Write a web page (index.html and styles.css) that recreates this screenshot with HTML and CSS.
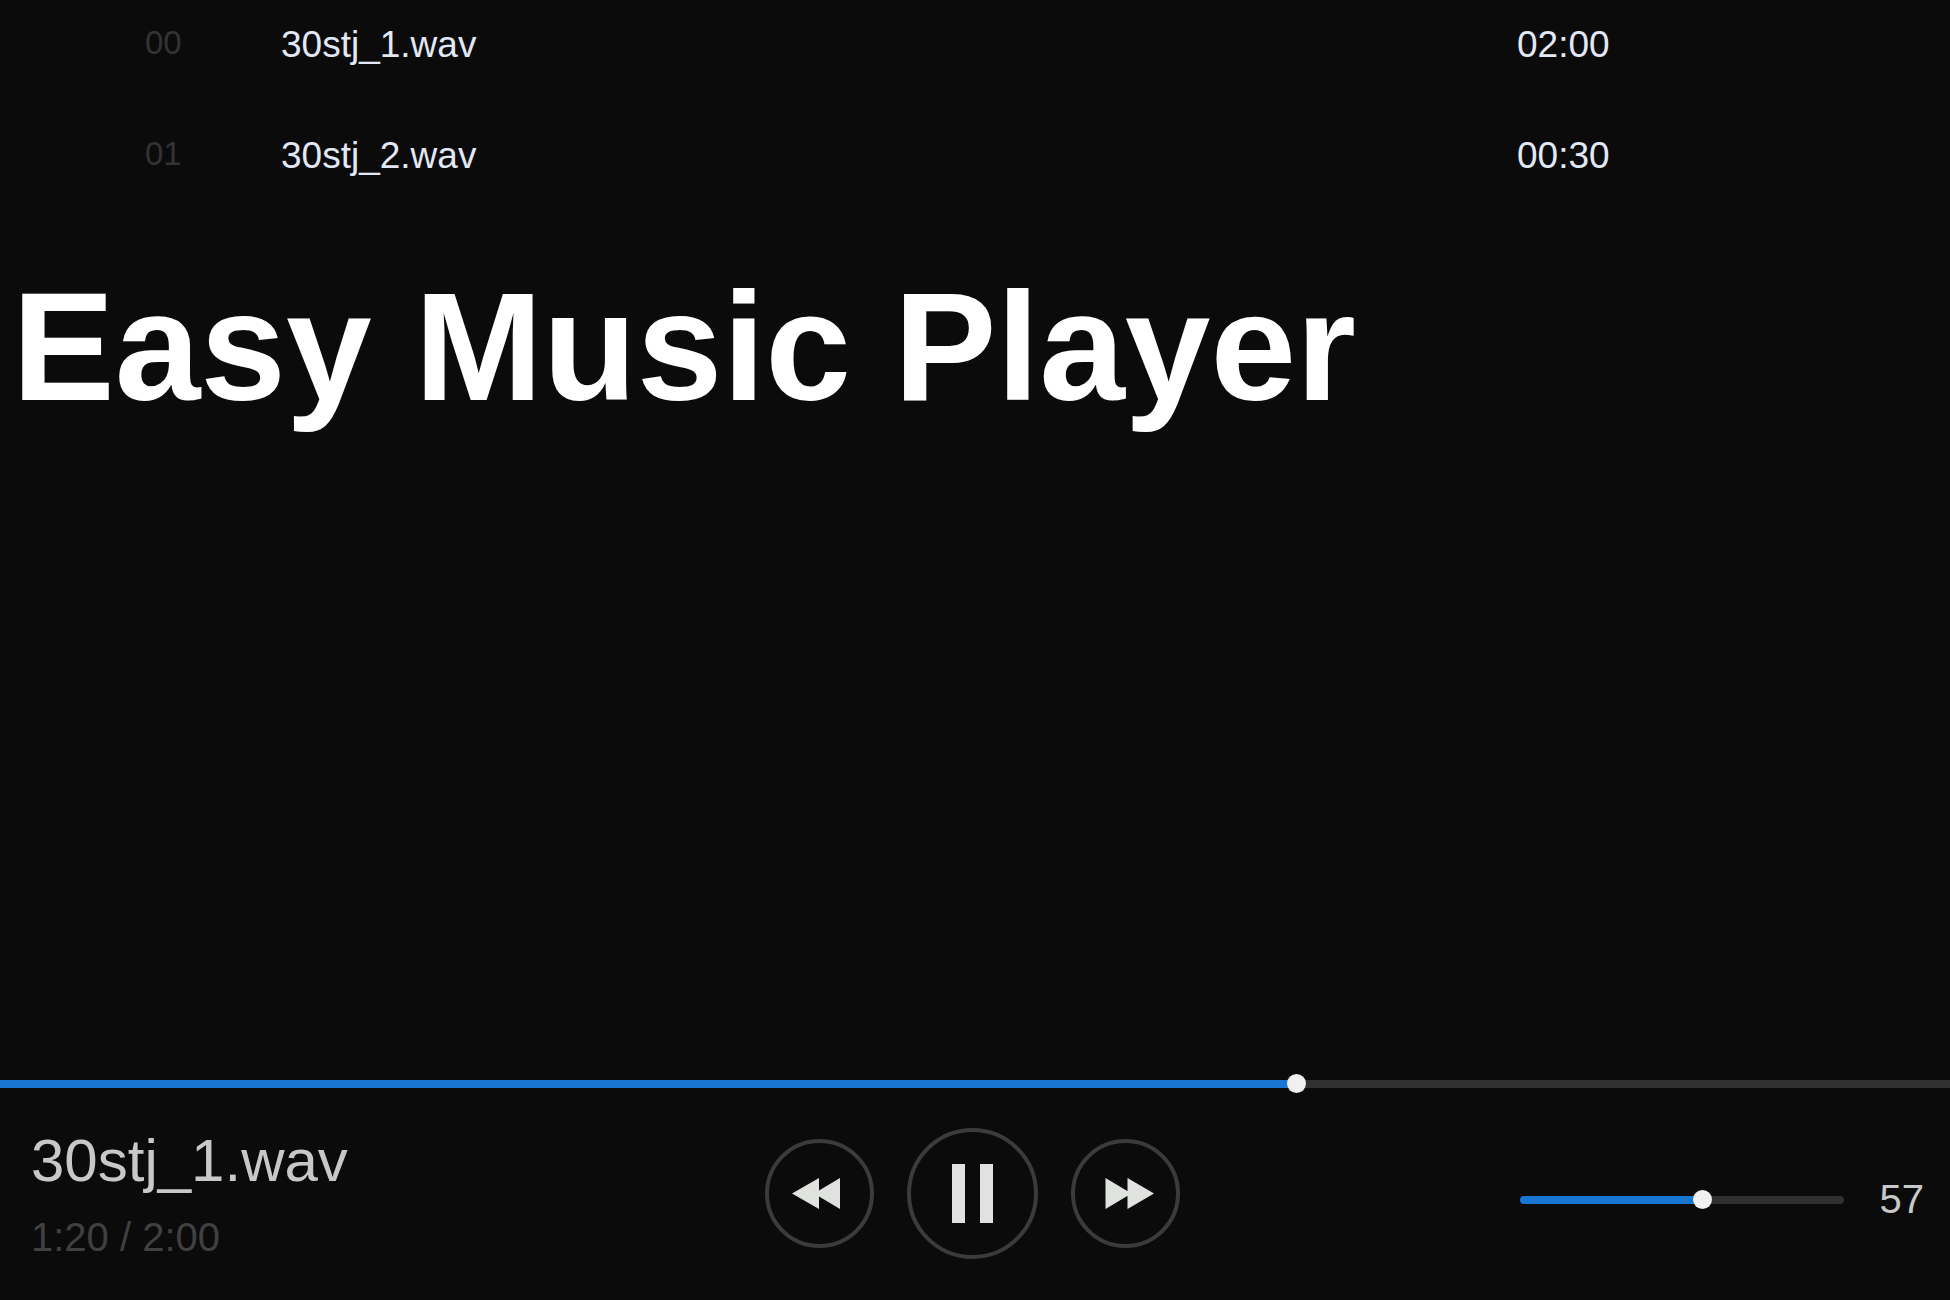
FILE: index.html
```html
<!DOCTYPE html>
<html lang="en">
<head>
    <meta charset="UTF-8">
    <meta name="viewport" content="width=device-width, initial-scale=1.0">
    <title>Easy Music Player</title>
    <link rel="stylesheet" href="styles.css">
</head>
<body>
    <main class="content">
        <table class="playlist">
            <tbody>
                <tr>
                    <td class="track-index">00</td>
                    <td class="track-name">30stj_1.wav</td>
                    <td class="track-length">02:00</td>
                </tr>
                <tr>
                    <td class="track-index">01</td>
                    <td class="track-name">30stj_2.wav</td>
                    <td class="track-length">00:30</td>
                </tr>
            </tbody>
        </table>
        <h1 class="title">Easy Music Player</h1>
    </main>
    <footer class="player">
        <input type="range" class="slider" id="seek" aria-label="Seek" min="0" max="120" value="80" style="--fill: 66.67%">
        <div class="player-body">
            <div class="now-playing">
                <div class="now-playing-name">30stj_1.wav</div>
                <div class="now-playing-time">1:20 / 2:00</div>
            </div>
            <div class="controls">
                <button type="button" class="control-btn" id="prevBtn" aria-label="Previous">
                    <svg viewBox="4 4 101 101">
                        <path d="M27 54.5L54 39V70ZM49 54.5L75 39V70Z"/>
                    </svg>
                </button>
                <button type="button" class="control-btn play-btn" id="playBtn" aria-label="Pause">
                    <svg viewBox="4 4 123 123">
                        <path d="M45 36H58V95H45ZM73 36H86V95H73Z"/>
                    </svg>
                </button>
                <button type="button" class="control-btn" id="nextBtn" aria-label="Next">
                    <svg viewBox="4 4 101 101">
                        <path d="M34.5 39L60.5 54.5L34.5 70ZM56.5 39L83 54.5L56.5 70Z"/>
                    </svg>
                </button>
            </div>
            <div class="volume">
                <input type="range" class="slider volume-slider" id="volume" aria-label="Volume" min="0" max="100" value="57" style="--fill: 57%">
                <output class="volume-value" for="volume">57</output>
            </div>
        </div>
    </footer>
    <script>
        const volume = document.getElementById('volume');
        const seek = document.getElementById('seek');
        const volumeValue = document.querySelector('.volume-value');

        function updateFill(slider) {
            slider.style.setProperty('--fill', slider.value / slider.max * 100 + '%');
        }

        seek.addEventListener('input', () => updateFill(seek));
        volume.addEventListener('input', () => {
            updateFill(volume);
            volumeValue.textContent = volume.value;
        });
    </script>
</body>
</html>
```
FILE: styles.css
```css
:root {
    --background-color: #0b0b0b;
    --accent-color: #1976d2;
    --track-color: #303030;
    --border-color: #3b3b3a;
    --icon-color: #e0e2df;
    --text-color: #c8c8c8;
    --muted-color: #404040;
}

* {
    box-sizing: border-box;
}

body {
    margin: 0;
    min-height: 100vh;
    display: flex;
    flex-direction: column;
    background-color: var(--background-color);
    color: var(--text-color);
    font-family: "Liberation Sans", Helvetica, Arial, sans-serif;
}

.content {
    flex: 1;
}

/* Playlist */
.playlist {
    width: 100%;
    table-layout: fixed;
    border-collapse: collapse;
    font-size: 37px;
    color: #e2e8f5;
}

.playlist td {
    padding: 24px 0 45px;
    vertical-align: top;
}

.playlist .track-index {
    width: 281px;
    padding-left: 145px;
    font-size: 33px;
    color: #333;
}

.track-length {
    width: 433px;
}

.title {
    margin: 37px 12px 0;
    font-size: 154px;
    font-weight: bold;
    color: #fff;
}

/* Sliders */
.slider {
    display: block;
    width: 100%;
    height: 20px;
    margin: 0;
    appearance: none;
    background: transparent;
    cursor: pointer;
}

.slider::-webkit-slider-runnable-track {
    height: 8px;
    background: linear-gradient(to right, var(--accent-color) var(--fill), var(--track-color) var(--fill));
}

.slider::-webkit-slider-thumb {
    appearance: none;
    width: 19px;
    height: 19px;
    margin-top: -6px;
    border-radius: 50%;
    background-color: #f0f0f0;
}

.volume-slider {
    width: 324px;
}

.volume-slider::-webkit-slider-runnable-track {
    border-radius: 4px;
}

/* Player bar */
.player-body {
    display: grid;
    grid-template-columns: 1fr auto 1fr;
    align-items: center;
    height: 206px;
    padding: 0 26px;
}

.now-playing {
    display: flex;
    flex-direction: column;
    gap: 20px;
    padding: 0 0 4px 5px;
}

.now-playing-name {
    font-size: 60px;
    line-height: 64px;
}

.now-playing-time {
    font-size: 40px;
    line-height: 48px;
    color: var(--muted-color);
}

.controls {
    display: flex;
    align-items: center;
    gap: 33px;
    padding: 0 5px 8px 0;
}

.control-btn {
    width: 109px;
    height: 109px;
    padding: 0;
    border: 4px solid var(--border-color);
    border-radius: 50%;
    background: none;
    cursor: pointer;
}

.play-btn {
    width: 131px;
    height: 131px;
}

.control-btn svg {
    display: block;
    width: 100%;
    fill: var(--icon-color);
}

.volume {
    display: flex;
    align-items: center;
    justify-content: flex-end;
    gap: 36px;
    padding-top: 5px;
}

.volume-value {
    font-size: 40px;
}
```
